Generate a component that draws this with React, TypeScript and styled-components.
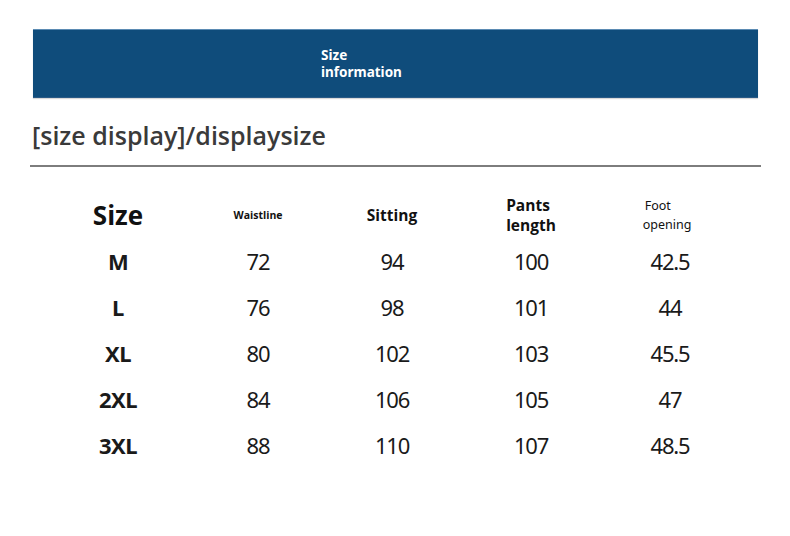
import { FC } from "react";
import styled, { createGlobalStyle } from "styled-components";

const rows = [
  ["M", "72", "94", "100", "42.5"],
  ["L", "76", "98", "101", "44"],
  ["XL", "80", "102", "103", "45.5"],
  ["2XL", "84", "106", "105", "47"],
  ["3XL", "88", "110", "107", "48.5"],
];

const App: FC = () => {
  return (
    <Page>
      <GlobalStyle />
      <Banner>
        <BannerText>
          <span>Size</span>
          <span>information</span>
        </BannerText>
      </Banner>
      <Heading>[size display]/displaysize</Heading>
      <Rule />
      <Table>
        <HeadCell>
          <BigLabel>Size</BigLabel>
        </HeadCell>
        <HeadCell>
          <SmallLabel>Waistline</SmallLabel>
        </HeadCell>
        <HeadCell>
          <MidLabel>Sitting</MidLabel>
        </HeadCell>
        <HeadCell>
          <MidLabel $left>
            <span>Pants</span>
            <span>length</span>
          </MidLabel>
        </HeadCell>
        <HeadCell>
          <FootLabel>
            <span>Foot</span>
            <span>opening</span>
          </FootLabel>
        </HeadCell>
        {rows.map((r) =>
          r.map((v, i) => (
            <Cell key={r[0] + i} $bold={i === 0}>
              {v}
            </Cell>
          ))
        )}
      </Table>
    </Page>
  );
};

export default App;

const GlobalStyle = createGlobalStyle`
  body {
    margin: 0;
    background: #fff;
    font-family: "Open Sans", "Noto Sans", sans-serif;
  }
`;

const Page = styled.div`
  width: 790px;
  height: 536px;
  padding-top: 29px;
  box-sizing: border-box;
`;

const Banner = styled.div`
  margin-left: 33px;
  width: 725px;
  height: 69px;
  background: #0f4c7b;
  border-top: 1px solid #5b8bb3;
  border-bottom: 1px solid #2a5a86;
  box-sizing: border-box;
  display: flex;
  align-items: center;
  padding-left: 288px;
  box-shadow: 0 1px 1px rgba(0, 0, 0, 0.15);
`;

const BannerText = styled.div`
  display: flex;
  flex-direction: column;
  color: #fff;
  font-family: "Noto Sans", sans-serif;
  font-weight: 700;
  font-size: 13.5px;
  line-height: 17px;
  margin-top: 1px;
`;

const Heading = styled.h1`
  margin: 22px 0 0 32px;
  font-size: 25px;
  line-height: 30px;
  font-weight: 600;
  color: #3a3a3a;
`;

const Rule = styled.div`
  margin: 15px 0 0 30px;
  width: 731px;
  height: 2px;
  background: #7d7d7d;
`;

const Table = styled.div`
  margin: 25px 0 0 48px;
  display: grid;
  grid-template-columns: 140px 140px 128px 150px 128px;
  grid-auto-rows: 46px;
  align-items: center;
  justify-items: center;
`;

const HeadCell = styled.div`
  display: flex;
  align-items: center;
  justify-content: center;
`;

const BigLabel = styled.span`
  font-size: 26px;
  font-weight: 700;
  color: #111;
`;

const SmallLabel = styled.span`
  font-size: 10.5px;
  font-weight: 700;
  color: #111;
`;

const MidLabel = styled.span<{ $left?: boolean }>`
  display: flex;
  flex-direction: column;
  align-items: ${(p) => (p.$left ? "flex-start" : "center")};
  font-size: 15.5px;
  font-weight: 700;
  line-height: 20px;
  color: #111;
`;

const FootLabel = styled.span`
  display: flex;
  flex-direction: column;
  font-family: "Noto Sans", sans-serif;
  font-size: 12.5px;
  line-height: 19px;
  color: #111;
  padding: 0 6px 0 0;
  & span:first-child {
    margin-left: 2px;
  }
`;

const Cell = styled.div<{ $bold?: boolean }>`
  font-family: "Noto Sans", sans-serif;
  font-size: 22px;
  font-weight: ${(p) => (p.$bold ? 700 : 400)};
  letter-spacing: ${(p) => (p.$bold ? "-0.5px" : "-1.2px")};
  color: #1a1a1a;
`;
